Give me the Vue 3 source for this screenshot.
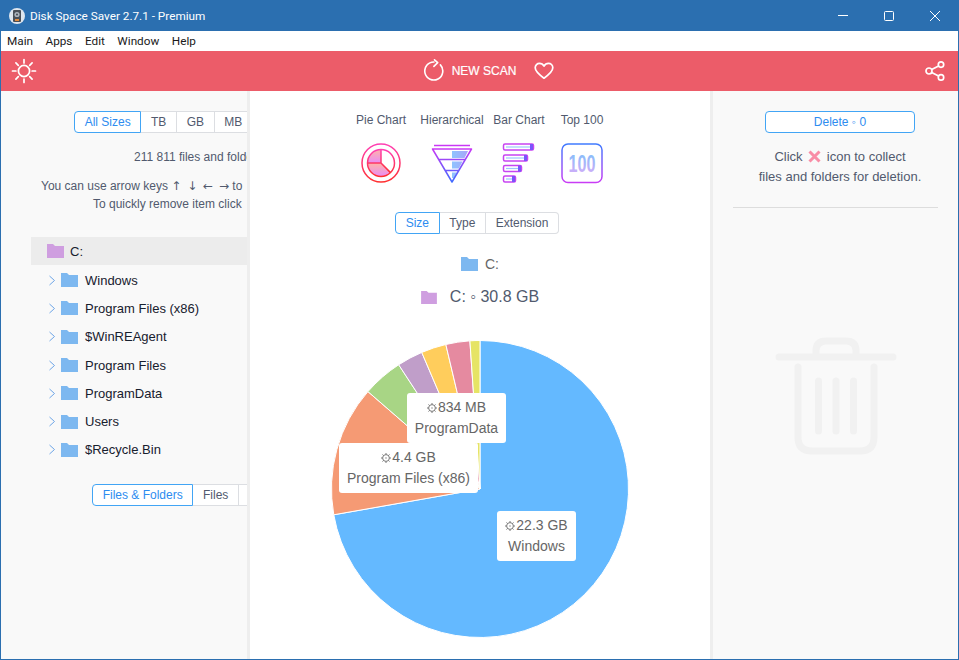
<template>
  <div class="window">
    <header class="titlebar">
      <svg class="app-icon" width="16" height="16" viewBox="0 0 16 16">
        <circle cx="8" cy="8" r="8" fill="#dfe6ee" />
        <rect x="4" y="2" width="8" height="12" rx="1" fill="#4a4f57" />
        <circle cx="8" cy="6.5" r="2.6" fill="#aeb5bd" />
        <circle cx="8" cy="6.5" r="0.9" fill="#3a3f46" />
        <rect x="6" y="11" width="4" height="2" fill="#e08a3c" />
      </svg>
      <span class="title">Disk Space Saver 2.7.1 - Premium</span>
      <div class="win-controls">
        <svg width="12" height="12" viewBox="0 0 12 12"><path d="M1 5.500h10" stroke="#fff" fill="none" /></svg>
        <svg width="12" height="12" viewBox="0 0 12 12"><rect x="1.500" y="1.500" width="9" height="9" rx="1" stroke="#fff" fill="none" /></svg>
        <svg width="12" height="12" viewBox="0 0 12 12"><path d="M1 1l10 10M11 1L1 11" stroke="#fff" fill="none" /></svg>
      </div>
    </header>

    <nav class="menubar">
      <span v-for="item in menu" :key="item">{{ item }}</span>
    </nav>

    <div class="toolbar">
      <svg class="sun" width="26" height="26" viewBox="0 0 26 26" fill="none" stroke="#fff" stroke-width="1.7" stroke-linecap="round">
        <circle cx="13" cy="13" r="5.600" />
        <path d="M13 1.500v3.400M13 21.100v3.400M1.500 13h3.400M21.100 13h3.400M4.900 4.900l2.400 2.400M18.700 18.700l2.400 2.400M4.900 21.100l2.400-2.400M18.700 7.300l2.400-2.400" />
      </svg>
      <div class="scan">
        <svg width="20" height="24" viewBox="0 0 20 24" fill="none" stroke="#fff" stroke-width="1.600" stroke-linecap="round" stroke-linejoin="round">
          <path d="M16.400 5.900A9 9 0 1 1 10 3" />
          <path d="M10.500 0.800l3.200 2.800-3.800 3.800" />
        </svg>
        <span class="scan-label">NEW SCAN</span>
        <svg class="heart" width="20" height="18" viewBox="0 0 20 18" fill="none" stroke="#fff" stroke-width="1.700" stroke-linejoin="round">
          <path d="M10 16.200C4.500 12.200 1.200 9.200 1.200 5.800 1.200 3.200 3.200 1.400 5.500 1.400c1.900 0 3.500 1 4.500 2.800 1-1.800 2.600-2.800 4.500-2.800 2.300 0 4.300 1.800 4.300 4.400 0 3.400-3.300 6.400-8.800 10.400z" />
        </svg>
      </div>
      <svg class="share" width="20" height="20" viewBox="0 0 20 20" fill="none" stroke="#fff" stroke-width="1.700">
        <circle cx="4" cy="10" r="3" />
        <circle cx="16" cy="3.600" r="2.700" />
        <circle cx="16" cy="16.400" r="2.700" />
        <path d="M6.700 8.600l6.900-3.700M6.700 11.400l6.900 3.700" />
      </svg>
    </div>

    <div class="panes">
      <aside class="pane-left">
        <div class="seg seg-sizes">
          <span v-for="(s, i) in sizes" :key="s" class="seg-item" :class="{ on: i === 0 }">{{ s }}</span>
        </div>
        <p class="count">211 811 files and folders</p>
        <p class="hint hint-keys">You can use arrow keys <span class="arrows">↑ ↓ ← →</span> to</p>
        <p class="hint hint-remove">To quickly remove item click</p>

        <div class="tree">
          <div class="tree-root">
            <svg class="folder" width="17" height="14" viewBox="0 0 17 14"><path d="M0 0h6l2 2h9v12H0z" fill="#cf9ee0" /></svg>
            <span>C:</span>
          </div>
          <div v-for="row in rows" :key="row" class="tree-row">
            <svg width="8" height="11" viewBox="0 0 8 11" fill="none" stroke="#6ea6e8" stroke-width="1"><path d="M1.500 1l5 4.500-5 4.500" /></svg>
            <svg class="folder" width="17" height="14" viewBox="0 0 17 14"><path d="M0 0h6l2 2h9v12H0z" fill="#7db8f0" /></svg>
            <span>{{ row }}</span>
          </div>
        </div>

        <div class="seg seg-files">
          <span v-for="(s, i) in fileTabs" :key="s" class="seg-item" :class="{ on: i === 0 }">{{ s }}</span>
        </div>
      </aside>

      <main class="pane-mid">
        <div class="charts">
          <div v-for="c in charts" :key="c.name" class="chart-tab">
            <span class="chart-name">{{ c.name }}</span>
            <svg v-if="c.kind === 'pie'" width="42" height="42" viewBox="0 0 42 42" fill="none">
              <defs>
                <linearGradient id="pieStroke" x1="0" y1="0" x2="0" y2="1"><stop offset="0" stop-color="#ff3fb4" /><stop offset="1" stop-color="#ff3030" /></linearGradient>
                <linearGradient id="pieFill" x1="0" y1="0" x2="0" y2="1"><stop offset="0" stop-color="#ffb3a8" /><stop offset="1" stop-color="#e98cf5" /></linearGradient>
              </defs>
              <g transform="translate(0 -1)">
                <circle cx="21" cy="21" r="19" stroke="url(#pieStroke)" stroke-width="1.500" />
                <path d="M21 21V7.500A13.500 13.500 0 0 0 7.500 21z" fill="url(#pieFill)" />
                <path d="M21 21H7.500A13.500 13.500 0 0 0 30.500 30.600z" fill="url(#pieFill)" />
                <circle cx="21" cy="21" r="13.500" stroke="url(#pieStroke)" stroke-width="1.500" />
                <path d="M21 7.500V21H7.500M21 21l9.500 9.600" stroke="url(#pieStroke)" stroke-width="1.500" />
              </g>
            </svg>
            <svg v-else-if="c.kind === 'funnel'" width="42" height="42" viewBox="0 0 42 42" fill="none">
              <defs>
                <linearGradient id="fnStroke" x1="0" y1="0" x2="0" y2="1"><stop offset="0" stop-color="#c938f5" /><stop offset="1" stop-color="#3f6bff" /></linearGradient>
                <linearGradient id="fnFill" x1="0" y1="0" x2="1" y2="0"><stop offset="0" stop-color="#8fc4ff" /><stop offset="1" stop-color="#a9a4f8" /></linearGradient>
              </defs>
              <path d="M3 2.500h36" stroke="#c938f5" stroke-width="1.500" />
              <path d="M21 8H37L33.500 15H21zM21 18.500H31.500L27.800 25.500H21zM21 29.500H26L23 35H21z" fill="url(#fnFill)" />
              <path d="M1.500 6H40.500L21 39zM7.700 16.500H34.300M14.200 27.500H27.800" stroke="url(#fnStroke)" stroke-width="1.500" stroke-linejoin="round" />
            </svg>
            <svg v-else-if="c.kind === 'bars'" width="42" height="42" viewBox="0 0 42 42" fill="none">
              <g v-for="b in bars" :key="b.y">
                <rect x="5.500" :y="b.y" :width="b.w" height="6" rx="1.500" stroke="#c744f2" stroke-width="1.500" fill="#fff" />
                <path :d="`M${b.w + 3.500} ${b.y}v6`" stroke="#7a55fa" stroke-width="3" />
                <path :d="`M8 ${b.y + 3}h${b.w - 6}`" stroke="#9cc8fb" stroke-width="1.200" />
              </g>
            </svg>
            <svg v-else width="42" height="42" viewBox="0 0 42 42" fill="none">
              <defs>
                <linearGradient id="topStroke" x1="0" y1="0" x2="0" y2="1"><stop offset="0" stop-color="#3f7bff" /><stop offset="1" stop-color="#c93cf5" /></linearGradient>
                <linearGradient id="topFill" x1="0" y1="0" x2="0" y2="1"><stop offset="0" stop-color="#7cc0fb" /><stop offset="1" stop-color="#dcaaf8" /></linearGradient>
              </defs>
              <rect x="1" y="1" width="40" height="38.500" rx="6" stroke="url(#topStroke)" stroke-width="1.500" />
              <text x="21" y="29" text-anchor="middle" class="top-text" fill="url(#topFill)" textLength="27" lengthAdjust="spacingAndGlyphs">100</text>
            </svg>
          </div>
        </div>

        <div class="seg seg-group">
          <span v-for="(s, i) in groupTabs" :key="s" class="seg-item" :class="{ on: i === 0 }">{{ s }}</span>
        </div>

        <div class="crumb">
          <svg width="17" height="14" viewBox="0 0 17 14"><path d="M0 0h6l2 2h9v12H0z" fill="#7db8f0" /></svg>
          <span>C:</span>
        </div>
        <div class="total">
          <svg width="16" height="13" viewBox="0 0 17 14"><path d="M0 0h6l2 2h9v12H0z" fill="#cf9ee0" /></svg>
          <span>C: ◦ 30.8 GB</span>
        </div>

        <div class="pie-wrap">
          <svg width="298" height="298" viewBox="0 0 298 298">
            <path v-for="s in slices" :key="s.color" :d="s.d" :fill="s.color" stroke="#fff" stroke-width="1" />
          </svg>
          <div
            v-for="l in labels"
            :key="l.name"
            class="pie-label"
            :style="{ left: l.x + 'px', top: l.y + 'px', width: l.w + 'px' }"
          >
            <div>
              <svg class="gear" width="10" height="10" viewBox="0 0 10 10" fill="none" stroke="#777">
                <circle cx="5" cy="5" r="3.400" />
                <circle cx="5" cy="5" r="0.700" fill="#777" stroke="none" />
                <path d="M5 0v1.400M5 8.600V10M0 5h1.400M8.600 5H10M1.500 1.500l1 1M7.500 7.500l1 1M8.500 1.500l-1 1M2.500 7.500l-1 1" />
              </svg>{{ l.size }}
            </div>
            <div>{{ l.name }}</div>
          </div>
        </div>
      </main>

      <aside class="pane-right">
        <button type="button" class="delete-btn">Delete ◦ 0</button>
        <p class="del-text">
          Click
          <svg width="13" height="13" viewBox="0 0 13 13"><path d="M1.500 1.500l10 10M11.500 1.500l-10 10" stroke="#f98da6" stroke-width="3" /></svg>
          icon to collect<br>files and folders for deletion.
        </p>
        <div class="rule"></div>
        <svg class="trash" width="122" height="118" viewBox="0 0 122 118" fill="none" stroke="#f1f1f1" stroke-width="7" stroke-linecap="round" stroke-linejoin="round">
          <path d="M4 20h114" />
          <path d="M41 19V14Q41 4 51 4H71Q81 4 81 14V19" />
          <path d="M23 30V100Q23 114 37 114H85Q99 114 99 100V30" />
          <path d="M43.500 44V94M61 44V94M78.500 44V94" />
        </svg>
      </aside>
    </div>
  </div>
</template>

<script setup>
const menu = ['Main', 'Apps', 'Edit', 'Window', 'Help']
const sizes = ['All Sizes', 'TB', 'GB', 'MB']
const fileTabs = ['Files & Folders', 'Files', 'Folders']
const groupTabs = ['Size', 'Type', 'Extension']
const rows = ['Windows', 'Program Files (x86)', '$WinREAgent', 'Program Files', 'ProgramData', 'Users', '$Recycle.Bin']

const charts = [
  { name: 'Pie Chart', kind: 'pie' },
  { name: 'Hierarchical', kind: 'funnel' },
  { name: 'Bar Chart', kind: 'bars' },
  { name: 'Top 100', kind: 'top' }
]

const bars = [
  { y: 1, w: 30 },
  { y: 12, w: 24 },
  { y: 22.500, w: 18 },
  { y: 33, w: 12 }
]

// end angle of every slice, clockwise from the top
const pieData = [
  { end: 260, color: '#64b9ff' },
  { end: 311, color: '#f59a74' },
  { end: 326.800, color: '#a8d585' },
  { end: 336.900, color: '#c09ec9' },
  { end: 346.700, color: '#ffcd5c' },
  { end: 356.100, color: '#e58aa0' },
  { end: 360, color: '#e6e465' }
]

const R = 148.500
const C = 149

function point(deg) {
  const a = (deg * Math.PI) / 180
  return `${(C + R * Math.sin(a)).toFixed(2)} ${(C - R * Math.cos(a)).toFixed(2)}`
}

let from = 0
const slices = pieData.map((p) => {
  const large = p.end - from > 180 ? 1 : 0
  const d = `M${C} ${C}L${point(from)}A${R} ${R} 0 ${large} 1 ${point(p.end)}Z`
  from = p.end
  return { d, color: p.color }
})

const labels = [
  { name: 'ProgramData', size: '834 MB', x: 76, y: 53, w: 99 },
  { name: 'Program Files (x86)', size: '4.4 GB', x: 8, y: 103, w: 139 },
  { name: 'Windows', size: '22.3 GB', x: 166, y: 171, w: 79 }
]
</script>

<style>
html,
body {
  margin: 0;
  overflow: hidden;
}
</style>

<style scoped>
.window {
  width: 959px;
  height: 660px;
  box-sizing: border-box;
  display: flex;
  flex-direction: column;
  border: 1px solid #2b6fb0;
  border-top: 0;
  font-family: "Liberation Sans", Arial, sans-serif;
  font-size: 12px;
  color: #515a6e;
  overflow: hidden;
}

.titlebar {
  height: 31px;
  flex: none;
  margin: 0 -1px;
  display: flex;
  align-items: center;
  background: #2b6fb0;
  color: #fff;
  font-family: Roboto, sans-serif;
  padding-left: 9px;
}

.title {
  margin-left: 5px;
  font-size: 11.750px;
}

.win-controls {
  margin-left: auto;
  display: flex;
  gap: 34px;
  padding-right: 18px;
}

.menubar {
  height: 20px;
  flex: none;
  display: flex;
  align-items: center;
  gap: 12.500px;
  padding-left: 6px;
  background: #fff;
  color: #1a1a1a;
  font-family: Roboto, sans-serif;
  font-size: 11.750px;
}

.toolbar {
  height: 40px;
  flex: none;
  display: flex;
  align-items: center;
  justify-content: space-between;
  background: #ec5c69;
  padding: 0 13px 0 10px;
}

.scan {
  display: flex;
  align-items: center;
  color: #fff;
  margin-left: 16px;
}

.scan-label {
  margin-left: 8px;
  font-size: 12px;
  -webkit-text-stroke: 0.2px #fff;
}

.heart {
  margin-left: 18px;
}

.panes {
  flex: 1;
  min-height: 0;
  display: flex;
}

.pane-left,
.pane-right {
  background: #f9f9f9;
}

.pane-left {
  width: 249px;
  flex: none;
  overflow: hidden;
  box-sizing: border-box;
  padding-top: 20px;
  white-space: nowrap;
  border-right: 3px solid #eeeeee;
}

.seg {
  display: inline-flex;
  height: 22px;
  box-sizing: border-box;
}

.seg-item {
  display: flex;
  align-items: center;
  box-sizing: border-box;
  height: 22px;
  padding: 0 9.670px;
  background: #fff;
  border: 1px solid #dcdee2;
  border-left: 0;
}

.seg-item:first-child {
  border-left: 1px solid #dcdee2;
  border-radius: 4px 0 0 4px;
}

.seg-item:last-child {
  border-radius: 0 4px 4px 0;
}

.seg-item.on {
  color: #2d8cf0;
  border: 1px solid #42a5f5;
}

.seg-sizes {
  display: flex;
  margin-left: 73px;
}

.count {
  margin: 17px 0 0 133px;
  line-height: 14px;
}

.hint {
  margin: 0;
  line-height: 14px;
}

.hint-keys {
  margin: 15px 0 0 40px;
}

.arrows {
  font-family: "DejaVu Sans", sans-serif;
  word-spacing: 2px;
}

.hint-remove {
  margin: 4px 0 0 92px;
}

.tree {
  margin: 26px 0 0 30px;
  font-size: 13px;
  color: #17202e;
}

.tree-root {
  height: 28px;
  display: flex;
  align-items: center;
  padding-left: 16px;
  gap: 6px;
  background: #ececec;
  margin-bottom: 1px;
}

.tree-row {
  height: 28.300px;
  display: flex;
  align-items: center;
  padding-left: 17px;
}

.tree-row .folder {
  margin-left: 5px;
  margin-right: 7px;
}

.seg-files {
  display: flex;
  margin: 20px 0 0 91px;
}

.pane-mid {
  width: 460px;
  flex: none;
  box-sizing: border-box;
  background: #fff;
  display: flex;
  flex-direction: column;
  align-items: center;
  padding-top: 22px;
}

.charts {
  display: flex;
  margin-right: 6px;
}

.chart-tab {
  display: flex;
  flex-direction: column;
  align-items: center;
  gap: 16px;
}

.chart-tab:nth-child(1) {
  width: 76px;
}

.chart-tab:nth-child(2) {
  width: 66px;
}

.chart-tab:nth-child(3) {
  width: 68px;
}

.chart-tab:nth-child(4) {
  width: 58px;
}

.chart-name {
  line-height: 14px;
  white-space: nowrap;
}

.top-text {
  font-family: "Liberation Sans", sans-serif;
  font-size: 23px;
  font-weight: 700;
}

.seg-group {
  margin-top: 27px;
  margin-right: 6px;
}

.crumb {
  margin-top: 22px;
  display: flex;
  align-items: center;
  gap: 7px;
  font-size: 14px;
  color: #666;
  height: 16px;
}

.total {
  margin-top: 15px;
  display: flex;
  align-items: center;
  gap: 13px;
  font-size: 16px;
  color: #515a6e;
  height: 20px;
}

.pie-wrap {
  position: relative;
  width: 298px;
  height: 298px;
  margin-top: 33px;
  flex: none;
}

.pie-wrap > svg {
  display: block;
}

.pie-label {
  position: absolute;
  box-sizing: border-box;
  height: 50px;
  padding-top: 4px;
  border-radius: 3px;
  background: #fff;
  color: #666;
  font-size: 14px;
  line-height: 21px;
  text-align: center;
  white-space: nowrap;
}

.gear {
  vertical-align: -1px;
  margin-right: 1px;
}

.pane-right {
  flex: 1;
  border-left: 3px solid #eeeeee;
  display: flex;
  flex-direction: column;
  align-items: center;
  padding-top: 20px;
}

.delete-btn {
  width: 150px;
  height: 22px;
  padding: 0;
  margin-left: 9px;
  background: #fff;
  border: 1px solid #42a5f5;
  border-radius: 4px;
  color: #2d8cf0;
  font: inherit;
}

.del-text {
  margin: 14px 0 0 9px;
  font-size: 13px;
  line-height: 20px;
  text-align: center;
}

.del-text svg {
  vertical-align: -2px;
  margin: 0 2px;
}

.rule {
  width: 205px;
  height: 1px;
  margin-top: 20px;
  background: #dddddd;
}

.trash {
  margin-top: 129px;
}
</style>
